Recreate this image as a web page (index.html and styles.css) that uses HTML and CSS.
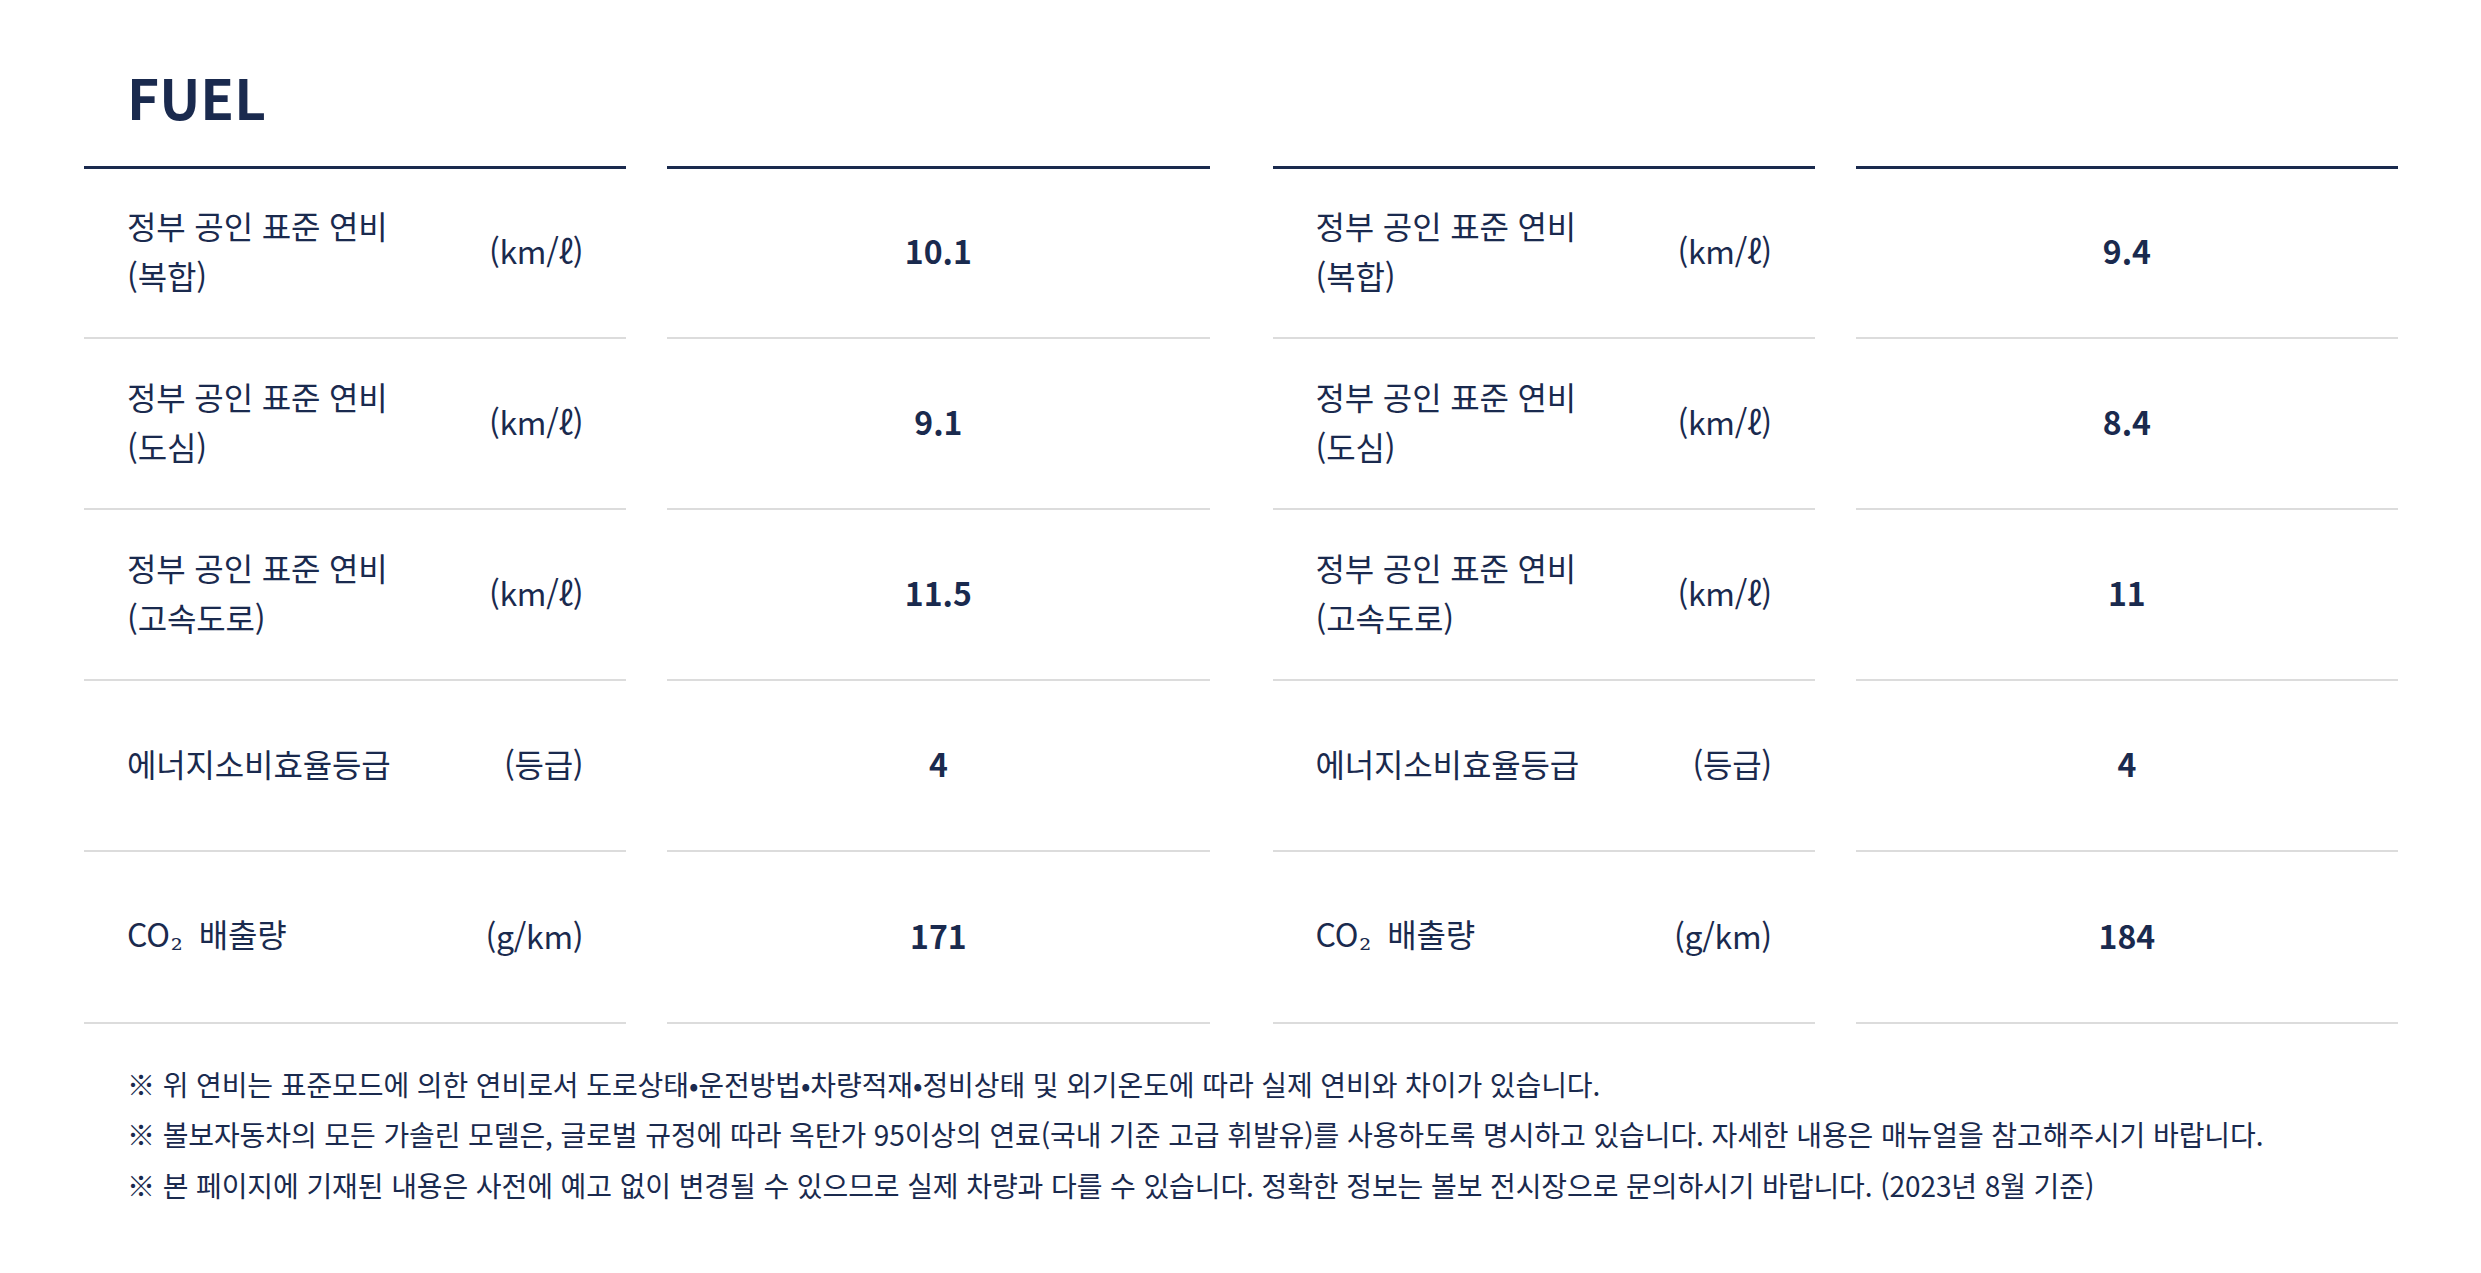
FILE: index.html
```html
<!DOCTYPE html>
<html lang="ko">
<head>
<meta charset="utf-8">
<title>FUEL</title>
<link rel="stylesheet" href="styles.css">
</head>
<body>
<section class="page">
  <h1 class="title">FUEL</h1>
  <div class="tables">
    <div class="group">
      <div class="cell label top"><span class="name">정부 공인 표준 연비<br>(복합)</span><span class="unit">(km/ℓ)</span></div>
      <div class="cell value top">10.1</div>
      <div class="cell label"><span class="name">정부 공인 표준 연비<br>(도심)</span><span class="unit">(km/ℓ)</span></div>
      <div class="cell value">9.1</div>
      <div class="cell label"><span class="name">정부 공인 표준 연비<br>(고속도로)</span><span class="unit">(km/ℓ)</span></div>
      <div class="cell value">11.5</div>
      <div class="cell label"><span class="name">에너지소비효율등급</span><span class="unit">(등급)</span></div>
      <div class="cell value">4</div>
      <div class="cell label"><span class="name">CO<span class="sub">₂</span>배출량</span><span class="unit">(g/km)</span></div>
      <div class="cell value">171</div>
    </div>
    <div class="group">
      <div class="cell label top"><span class="name">정부 공인 표준 연비<br>(복합)</span><span class="unit">(km/ℓ)</span></div>
      <div class="cell value top">9.4</div>
      <div class="cell label"><span class="name">정부 공인 표준 연비<br>(도심)</span><span class="unit">(km/ℓ)</span></div>
      <div class="cell value">8.4</div>
      <div class="cell label"><span class="name">정부 공인 표준 연비<br>(고속도로)</span><span class="unit">(km/ℓ)</span></div>
      <div class="cell value">11</div>
      <div class="cell label"><span class="name">에너지소비효율등급</span><span class="unit">(등급)</span></div>
      <div class="cell value">4</div>
      <div class="cell label"><span class="name">CO<span class="sub">₂</span>배출량</span><span class="unit">(g/km)</span></div>
      <div class="cell value">184</div>
    </div>
  </div>
  <div class="notes">
    <p>※ 위 연비는 표준모드에 의한 연비로서 도로상태•운전방법•차량적재•정비상태 및 외기온도에 따라 실제 연비와 차이가 있습니다.</p>
    <p>※ 볼보자동차의 모든 가솔린 모델은, 글로벌 규정에 따라 옥탄가 95이상의 연료(국내 기준 고급 휘발유)를 사용하도록 명시하고 있습니다. 자세한 내용은 매뉴얼을 참고해주시기 바랍니다.</p>
    <p>※ 본 페이지에 기재된 내용은 사전에 예고 없이 변경될 수 있으므로 실제 차량과 다를 수 있습니다. 정확한 정보는 볼보 전시장으로 문의하시기 바랍니다. (2023년 8월 기준)</p>
  </div>
</section>
</body>
</html>
```

FILE: styles.css
```css
html, body {
  margin: 0;
  padding: 0;
  background: #ffffff;
}

body {
  font-family: "Noto Sans CJK KR", "Noto Sans", sans-serif;
  color: #1a2a4e;
}

.page {
  padding: 62px 83px 0 84px;
}

.title {
  margin: 0 0 36px 43px;
  font-size: 55px;
  line-height: 68px;
  font-weight: 700;
}

.tables {
  display: flex;
  gap: 63px;
}

.group {
  flex: 1;
  display: grid;
  grid-template-columns: 1fr 1fr;
  column-gap: 41px;
}

.cell {
  box-sizing: border-box;
  height: 171.3px;
  padding-bottom: 5px;
  border-bottom: 2px solid #dcdcdc;
  display: flex;
  align-items: center;
}

.cell.top {
  height: 172.5px;
  border-top: 3px solid #1a2a4e;
}

.label {
  justify-content: space-between;
  padding-left: 43px;
  padding-right: 43px;
  font-size: 32px;
  line-height: 50px;
  letter-spacing: -0.005em;
}

.unit {
  letter-spacing: -0.01em;
}

.sub {
  font-family: "DejaVu Serif", serif;
  font-size: 30px;
  margin: 0 16px 0 1px;
  position: relative;
  top: 3px;
}

.value {
  justify-content: center;
  font-size: 32px;
  font-weight: 700;
}

.notes {
  margin-top: 35px;
  padding-left: 43px;
  font-size: 28px;
  line-height: 50.5px;
  letter-spacing: -0.1px;
}

.notes p {
  margin: 0;
}
```
